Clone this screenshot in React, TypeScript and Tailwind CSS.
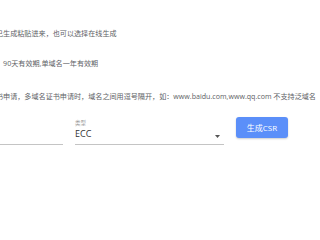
import React from "react";

export default function App() {
  const font = { fontFamily: "'Open Sans', 'Noto Sans CJK SC', sans-serif" };
  return (
    <div className="w-[320px] h-[240px] bg-white overflow-hidden" style={font}>
      <div className="ml-[-4px] w-[340px] pt-[28px] text-[#606266]">
        <p className="text-[7.1px] leading-[10px] whitespace-nowrap">己生成粘贴进来，也可以选择在线生成</p>
        <p className="mt-[20px] text-[7.1px] leading-[10px] whitespace-nowrap">，90天有效期,单域名一年有效期</p>
        <p className="mt-[23px] text-[7.1px] leading-[10px] whitespace-nowrap">
          书申请，多域名证书申请时，域名之间用逗号隔开，如：www.baidu.com,www.qq.com 不支持泛域名
        </p>
        <div className="mt-[16px] flex items-start">
          <div className="w-[67px] h-[28px] border-b border-[#c4c4c4]" />
          <div className="ml-[12px] w-[149px] h-[28px] border-b border-[#c4c4c4] flex flex-col">
            <span className="mt-[3px] text-[5.5px] leading-[6px] text-[#9a9a9a]">类型</span>
            <div className="mt-[3px] flex items-center justify-between pr-[4px]">
              <span className="text-[9px] leading-[10px] text-[#333]">ECC</span>
              <svg width="5" height="3" viewBox="0 0 5 3" className="mt-[4px]">
                <polygon points="0,0 5,0 2.5,3" fill="#555" />
              </svg>
            </div>
          </div>
          <button className="ml-[12px] w-[52px] h-[21px] rounded-[3px] bg-[#5b8ff9] text-white text-[8px] leading-[21px] shadow-[0_1px_2px_rgba(0,0,0,0.2)]">
            生成CSR
          </button>
        </div>
      </div>
    </div>
  );
}
